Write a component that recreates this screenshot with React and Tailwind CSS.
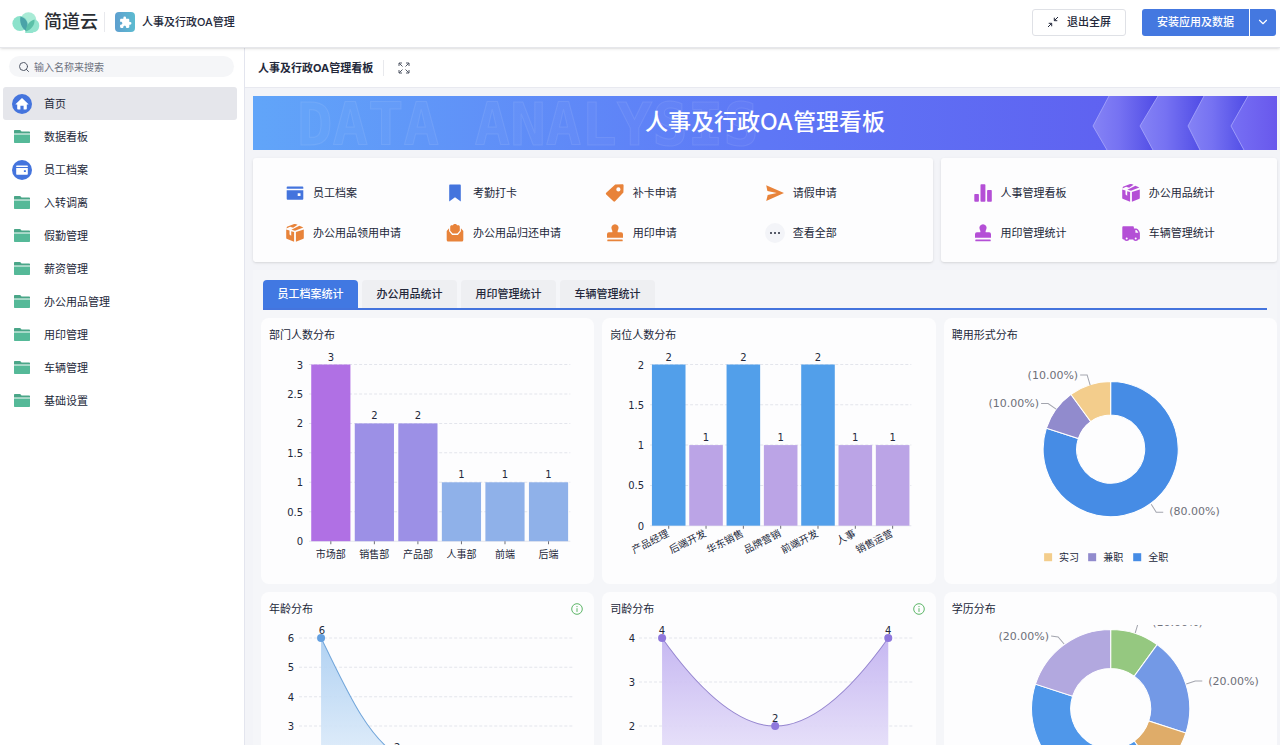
import React from 'react';
import { Search, ChevronDown } from 'lucide-react';
import { MdExtension } from 'react-icons/md';

const Wallet = ({ className }) => (
    <svg viewBox="0 0 20 20" className={className} fill="currentColor" aria-hidden="true">
        <path d="M2.500 3.500h15a.8.800 0 0 1 .8.800v1.400H1.700V4.300a.8.800 0 0 1 .8-.8z" />
        <path fillRule="evenodd" d="M1.700 7.300h16.600v8.500a.9.900 0 0 1-.9.900H2.600a.9.900 0 0 1-.9-.9zM12.700 10.200v2.800h2.800v-2.800z" />
    </svg>
);

const Bookmark = ({ className }) => (
    <svg viewBox="0 0 20 20" className={className} fill="currentColor" aria-hidden="true">
        <path d="M5 1.600h10a.8.800 0 0 1 .8.800v16L10 14.300l-5.800 4.100v-16A.8.800 0 0 1 5 1.600z" />
    </svg>
);

const Tag = ({ className }) => (
    <svg viewBox="0 0 20 20" className={className} fill="currentColor" aria-hidden="true">
        <path fillRule="evenodd" d="M10.200 1.500l7.200-.3c.7 0 1.200.5 1.200 1.200l-.2 7-8.300 8.900a1.200 1.200 0 0 1-1.700 0L1.200 11.400a1.200 1.200 0 0 1 0-1.700zM13.400 4.300a2.100 2.100 0 1 0 0 4.200 2.100 2.100 0 0 0 0-4.200z" />
    </svg>
);

const Send = ({ className }) => (
    <svg viewBox="0 0 20 20" className={className} fill="currentColor" aria-hidden="true">
        <path d="M1.200 2.200L19 10 1.200 18l1.500-5.900 9-2.100-9.300-2z" />
    </svg>
);

const Box = ({ className }) => (
    <svg viewBox="0 0 20 20" className={className} fill="currentColor" aria-hidden="true">
        <path d="M1.400 5.500l3.700-1.700 3 .9 4.500-2.900-2.300-.8a2 2 0 0 0-1.200 0L2 3.700z" />
        <path d="M1.200 6.600l3.300 1v4l1.700 1.200V8.200l2.900.9v9.700l-6.900-2.700a1.500 1.500 0 0 1-1-1.400z" />
        <path d="M10.900 9.100l7.900-2.500v8.100c0 .7-.4 1.200-1 1.400l-6.900 2.700z" />
        <path d="M6.400 6.700l8-3.900 4 1.600-8.400 3.400z" />
    </svg>
);

const Inbox = ({ className }) => (
    <svg viewBox="0 0 20 20" className={className} fill="currentColor" aria-hidden="true">
        <path d="M5.200 3.800c0-.9.6-1.500 1.500-1.500H8c.2-.8.9-1.200 2-1.200s1.800.4 2 1.200h1.300c.9 0 1.500.6 1.500 1.500v3.900l-2.500 2.800H7.700L5.200 7.700z" />
        <path d="M4.100 5.200v3l3 3.700h5.800l3-3.700v-3L18.300 8v9a1.500 1.500 0 0 1-1.500 1.500H3.200A1.500 1.500 0 0 1 1.700 17V8z" />
    </svg>
);

const Stamp = ({ className }) => (
    <svg viewBox="0 0 20 20" className={className} fill="currentColor" aria-hidden="true">
        <path d="M10 1.200a3.600 3.600 0 0 1 3.400 4.800c-.6 1.400-1 2.500-.7 3.300h3.400a1.900 1.900 0 0 1 1.900 1.900v3.500H2v-3.500a1.900 1.900 0 0 1 1.900-1.900h3.400c.3-.8-.1-1.900-.7-3.300A3.600 3.600 0 0 1 10 1.200z" />
        <rect x="2.300" y="16.400" width="15.400" height="1.900" rx=".6" />
    </svg>
);

const Bars = ({ className }) => (
    <svg viewBox="0 0 20 20" className={className} fill="currentColor" aria-hidden="true">
        <rect x="1.300" y="11" width="4.600" height="7.800" rx=".8" />
        <rect x="7.500" y="1.300" width="4.900" height="17.500" rx=".8" />
        <rect x="14.100" y="7" width="4.700" height="11.800" rx=".8" />
    </svg>
);

const Truck = ({ className }) => (
    <svg viewBox="0 0 20 20" className={className} fill="currentColor" aria-hidden="true">
        <path fillRule="evenodd" d="M2.500 3.300h9.200c.7 0 1.200.5 1.200 1.200v.9h2.500c1.200 0 3.500 3 3.500 4.500v5.500c0 .6-.5 1.100-1.100 1.100H2.500c-.7 0-1.200-.5-1.200-1.200V4.500c0-.7.5-1.200 1.200-1.200zM14.400 7v2.800h2.900c-.2-1-1.200-2.400-2-2.800z" />
        <circle cx="5.700" cy="15.500" r="2.500" />
        <circle cx="14.700" cy="15.500" r="2.500" />
        <circle cx="5.700" cy="15.500" r="1" fill="#fff" />
        <circle cx="14.700" cy="15.500" r="1" fill="#fff" />
    </svg>
);

const More = () => (
    <span className="flex size-5 items-center justify-center gap-[2px] rounded-full bg-[#f3f4f8]">
        <span className="size-[2px] rounded-full bg-[#23283a]" />
        <span className="size-[2px] rounded-full bg-[#23283a]" />
        <span className="size-[2px] rounded-full bg-[#23283a]" />
    </span>
);

const Folder = () => (
    <svg viewBox="0 0 16 13" className="h-[13px] w-4" aria-hidden="true">
        <path d="M0 3.600V1C0 .4.400 0 1 0h4.700c.5 0 .8.200 1.100.6l.7.900H15c.6 0 1 .4 1 1v1.100z" fill="#4aa688" />
        <path d="M0 4.400h16v7.600c0 .6-.4 1-1 1H1c-.6 0-1-.4-1-1z" fill="#55b998" />
    </svg>
);

const Home = () => (
    <span className="flex size-5 items-center justify-center rounded-full bg-[#4474dd]">
        <svg viewBox="0 0 14 14" className="size-[14px]" fill="#fff" aria-hidden="true">
            <path d="M7 1l6.300 5.900c.3.300.1.700-.3.700h-1.200v4.200c0 .5-.3.800-.8.800H8.600V8.800H5.400v3.800H3c-.5 0-.8-.3-.8-.8V7.600H1c-.4 0-.6-.4-.3-.7z" />
        </svg>
    </span>
);

const Logo = () => (
    <svg viewBox="0 0 28 21" className="h-[21px] w-7" aria-hidden="true">
        <circle cx="16.500" cy="8" r="7.800" fill="#a9ebd6" />
        <circle cx="8" cy="11.500" r="7.600" fill="#8ce2cb" />
        <path d="M13 20.500a6.800 6.800 0 0 0 8.500-.2 6.600 6.600 0 0 0 1.500-12.700C18.500 9 14 14 13 20.500z" fill="#93e4ce" />
        <path d="M8.500 4.500c5 1.500 7.500 5 7 9.500l-1.500 5C9.500 16 7.300 10 8.500 4.500z" fill="#4aa3a8" />
        <path d="M22.500 7.600c.5 5-2.500 9.900-8.500 11.900-.2-5.500 3-10.500 8.500-11.900z" fill="#5cc0a8" />
    </svg>
);

const navItems = [
    { label: '首页', icon: 'home', active: true },
    { label: '数据看板' },
    { label: '员工档案', icon: 'wallet' },
    { label: '入转调离' },
    { label: '假勤管理' },
    { label: '薪资管理' },
    { label: '办公用品管理' },
    { label: '用印管理' },
    { label: '车辆管理' },
    { label: '基础设置' },
];

const shortcuts = [
    { label: '员工档案', icon: Wallet, color: 'text-[#4474dd]' },
    { label: '考勤打卡', icon: Bookmark, color: 'text-[#4474dd]' },
    { label: '补卡申请', icon: Tag, color: 'text-[#e8833a]' },
    { label: '请假申请', icon: Send, color: 'text-[#e8833a]' },
    { label: '办公用品领用申请', icon: Box, color: 'text-[#e8833a]' },
    { label: '办公用品归还申请', icon: Inbox, color: 'text-[#e8833a]' },
    { label: '用印申请', icon: Stamp, color: 'text-[#e8833a]' },
    { label: '查看全部', icon: More, color: '' },
];

const reports = [
    { label: '人事管理看板', icon: Bars, color: 'text-[#b44fd6]' },
    { label: '办公用品统计', icon: Box, color: 'text-[#b44fd6]' },
    { label: '用印管理统计', icon: Stamp, color: 'text-[#b44fd6]' },
    { label: '车辆管理统计', icon: Truck, color: 'text-[#b44fd6]' },
];

const tabs = ['员工档案统计', '办公用品统计', '用印管理统计', '车辆管理统计'];

const NavIcon = ({ name }) => {
    if (name === 'home') return <Home />;
    if (name === 'wallet') {
        return (
            <span className="flex size-5 items-center justify-center rounded-full bg-[#4474dd] text-white">
                <Wallet className="size-[14px]" />
            </span>
        );
    }
    return <Folder />;
};

const Shortcut = ({ label, icon: Icon, color }) => (
    <a href="#" className="flex h-10 items-center gap-2 whitespace-nowrap">
        <span className={color}>
            <Icon className="block size-5" />
        </span>
        {label}
    </a>
);

// Charts share one canvas: 333 wide, starting below the 33px card title
const ChartSvg = ({ label, children }) => (
    <svg viewBox="0 33 333 233" className="block w-full overflow-hidden" role="img" aria-label={label}>
        {children}
    </svg>
);

const numberText = "font-['DejaVu_Sans',sans-serif] text-[10px] fill-[#23283a]";
const nameText = "font-['Noto_Sans_CJK_SC',sans-serif] text-[10px] fill-[#23283a]";
const pieText = "font-['DejaVu_Sans',sans-serif] text-[11px] fill-[#6e7079]";

const YAxis = ({ ticks, top, bottom, max, x, left, right }) =>
    ticks.map((t) => {
        const y = bottom - ((bottom - top) * t) / max;
        return (
            <g key={t}>
                <line x1={left} x2={right} y1={y} y2={y} stroke="#e3e5ec" strokeDasharray={t === 0 ? '0' : '3 2'} />
                <text x={x} y={y + 4} textAnchor="end" className={numberText}>{t}</text>
            </g>
        );
    });

const BarChart = ({ label, data, ticks, max, bottom, rotate }) => {
    const left = 48;
    const right = 309;
    const top = 46.5;
    const step = (right - left) / data.length;
    const barWidth = step * 0.9;
    return (
        <ChartSvg label={label}>
            <YAxis ticks={ticks} top={top} bottom={bottom} max={max} x={42} left={left} right={right} />
            {data.map(({ name, value, color }, i) => {
                const h = ((bottom - top) * value) / max;
                const cx = left + step * (i + 0.5);
                return (
                    <g key={name}>
                        <rect x={cx - barWidth / 2} y={bottom - h} width={barWidth} height={h} fill={color} />
                        <line x1={cx} x2={cx} y1={bottom} y2={bottom + 3} stroke="#6e7079" />
                        <text x={cx} y={bottom - h - 4} textAnchor="middle" className={numberText}>{value}</text>
                        {rotate ? (
                            <text transform={`translate(${cx + 1} ${bottom + 10}) rotate(-27)`} textAnchor="end" className={nameText}>{name}</text>
                        ) : (
                            <text x={cx} y={bottom + 17} textAnchor="middle" className={nameText}>{name}</text>
                        )}
                    </g>
                );
            })}
        </ChartSvg>
    );
};

const point = (cx, cy, r, deg) => {
    const a = ((deg - 90) * Math.PI) / 180;
    return `${cx + r * Math.cos(a)} ${cy + r * Math.sin(a)}`;
};

const Donut = ({ cx, cy, outer, inner, slices }) =>
    slices.map(({ from, to, color }) => {
        const large = to - from > 180 ? 1 : 0;
        const d = `M${point(cx, cy, outer, from)} A${outer} ${outer} 0 ${large} 1 ${point(cx, cy, outer, to)} L${point(cx, cy, inner, to)} A${inner} ${inner} 0 ${large} 0 ${point(cx, cy, inner, from)} Z`;
        return <path key={from} d={d} fill={color} stroke="#fff" strokeWidth="1" />;
    });

const PieLabel = ({ line, x, y, anchor, children }) => (
    <g>
        <polyline points={line} fill="none" stroke="#a3a5ae" />
        <text x={x} y={y} textAnchor={anchor} className={pieText}>{children}</text>
    </g>
);

const ChartCard = ({ title, info, children }) => (
    <section className="overflow-hidden rounded-lg bg-[#fdfdfe]">
        <div className="flex h-[33px] items-center justify-between pl-2 pr-[11px]">
            <h3 className="text-[11px]">{title}</h3>
            {info && (
                <svg viewBox="0 0 12 12" className="size-3" fill="none" stroke="#5cb567" aria-hidden="true">
                    <circle cx="6" cy="6" r="5.300" />
                    <path d="M6 5.200v3.700M6 3v1.100" />
                </svg>
            )}
        </div>
        {children}
    </section>
);

const departments = [
    { name: '市场部', value: 3, color: '#b070e4' },
    { name: '销售部', value: 2, color: '#9c90e6' },
    { name: '产品部', value: 2, color: '#9c90e6' },
    { name: '人事部', value: 1, color: '#8fb1e9' },
    { name: '前端', value: 1, color: '#8fb1e9' },
    { name: '后端', value: 1, color: '#8fb1e9' },
];

const positions = [
    { name: '产品经理', value: 2, color: '#529fea' },
    { name: '后端开发', value: 1, color: '#bba4e6' },
    { name: '华东销售', value: 2, color: '#529fea' },
    { name: '品牌营销', value: 1, color: '#bba4e6' },
    { name: '前端开发', value: 2, color: '#529fea' },
    { name: '人事', value: 1, color: '#bba4e6' },
    { name: '销售运营', value: 1, color: '#bba4e6' },
];

const Header = () => (
    <header className="relative z-10 flex h-12 shrink-0 items-center border-b border-[#e6e7eb] bg-white pl-3 pr-1 pb-[3px] shadow-sm">
        <a href="#" className="flex items-center gap-1">
            <Logo />
            <span className="text-[18px] leading-6 font-medium text-[#2a2e33]">简道云</span>
        </a>
        <span className="ml-1.5 h-5 w-px bg-[#e8e9ed]" />
        <span className="ml-[10px] flex size-5 items-center justify-center rounded bg-linear-to-r from-[#5e9fcf] to-[#5cbbd0] text-white">
            <MdExtension className="size-[13px]" />
        </span>
        <h1 className="ml-[7px] font-medium">人事及行政OA管理</h1>
        <div className="ml-auto flex items-center gap-4">
            <button type="button" className="flex h-[27px] w-[94px] items-center justify-center gap-2 rounded-[3px] border border-[#dfe1e6] font-medium">
                <svg viewBox="0 0 12 12" className="size-3" fill="none" stroke="#23283a" aria-hidden="true">
                    <path d="M11 1L7.500 4.500M7.300 1.700v3h3M1 11l3.500-3.500M1.700 7.300h3v3" />
                </svg>
                退出全屏
            </button>
            <div className="flex h-[27px] gap-px overflow-hidden rounded-[3px] text-white">
                <button type="button" className="w-[107px] bg-[#4478e0] font-medium">安装应用及数据</button>
                <button type="button" aria-label="更多安装方式" className="flex w-[26px] items-center justify-center bg-[#4478e0]">
                    <ChevronDown size={14} />
                </button>
            </div>
        </div>
    </header>
);

const Sidebar = () => (
    <aside className="w-[245px] shrink-0 border-r border-[#e3e5ee] bg-white pt-2">
        <label className="ml-[9px] mr-[10px] flex h-[21px] items-center gap-1 rounded-full bg-[#f5f6f8] pl-[9px]">
            <Search size={12} className="shrink-0 text-[#525967]" />
            <input
                type="text"
                aria-label="搜索"
                placeholder="输入名称来搜索"
                className="w-full bg-transparent text-[10px] outline-none placeholder:text-[#6d7280]"
            />
        </label>
        <nav className="mt-[10px] pl-[3px] pr-[7px]">
            {navItems.map(({ label, icon, active }) => (
                <a
                    key={label}
                    href="#"
                    className={`flex h-[33px] items-center gap-3 rounded-[3px] pl-[9px] ${active ? 'bg-[#e5e6eb]' : ''}`}
                >
                    <span className="flex w-5 justify-center">
                        <NavIcon name={icon} />
                    </span>
                    {label}
                </a>
            ))}
        </nav>
    </aside>
);

const Banner = () => (
    <div className="relative flex h-[54px] items-center justify-center overflow-hidden bg-linear-to-r from-[#61a5f9] via-[#5e77f6] to-[#5f57ee] pb-[2px]">
        <svg viewBox="0 0 540 54" className="absolute left-0 top-0 h-[54px] w-[540px]" aria-hidden="true">
            <text
                x="44"
                y="49"
                className="font-['DejaVu_Sans_Mono',monospace] text-[59px] font-bold"
                fill="#fff"
                fillOpacity=".03"
                stroke="#fff"
                strokeOpacity=".09"
            >
                DATA ANALYSIS
            </text>
        </svg>
        <svg viewBox="0 0 190 54" className="absolute right-0 top-0 h-[54px] w-[190px]" aria-hidden="true">
            <defs>
                <linearGradient id="arrow" x1="0" x2="1" y1="0" y2="0">
                    <stop offset="0" stopColor="#8583f5" />
                    <stop offset=".4" stopColor="#7672f2" />
                    <stop offset="1" stopColor="#4f4be5" />
                </linearGradient>
                <linearGradient id="arrowEnd" x1="0" x2="1" y1="0" y2="0">
                    <stop offset="0" stopColor="#7770f4" />
                    <stop offset="1" stopColor="#6858ec" />
                </linearGradient>
            </defs>
            <path d="M22 0L6 30l14 24h46L53 30 71 0z" fill="url(#arrow)" />
            <path d="M71 0L53 30l13 24h47l-12-24 16-30z" fill="url(#arrow)" />
            <path d="M117 0l-16 30 12 24h44l-13-24 17-30z" fill="url(#arrow)" />
            <path d="M161 0l-17 30 13 24h33V0z" fill="url(#arrowEnd)" />
            <g fill="none" stroke="#a9a8fb" strokeOpacity=".8">
                <path d="M22 0L6 30l14 24M71 0L53 30l13 24M117 0l-16 30 12 24M161 0l-17 30 13 24" />
            </g>
        </svg>
        <h2 className="relative text-[23px] leading-8 font-medium text-white">人事及行政OA管理看板</h2>
    </div>
);

const legend = [
    { name: '实习', color: '#f3cd8c', x: 100 },
    { name: '兼职', color: '#918bcd', x: 144 },
    { name: '全职', color: '#468ce5', x: 189 },
];

const Charts = () => (
    <div className="mt-2 grid grid-cols-3 gap-2 pl-2">
        <ChartCard title="部门人数分布">
            <BarChart label="部门人数分布" data={departments} ticks={[0, 0.5, 1, 1.5, 2, 2.5, 3]} max={3} bottom={223} />
        </ChartCard>

        <ChartCard title="岗位人数分布">
            <BarChart label="岗位人数分布" data={positions} ticks={[0, 0.5, 1, 1.5, 2]} max={2} bottom={207.5} rotate />
        </ChartCard>

        <ChartCard title="聘用形式分布">
            <ChartSvg label="聘用形式分布">
                <Donut
                    cx={166.5}
                    cy={131}
                    outer={67.5}
                    inner={34}
                    slices={[
                        { from: 0, to: 288, color: '#468ce5' },
                        { from: 288, to: 324, color: '#918bcd' },
                        { from: 324, to: 360, color: '#f3cd8c' },
                    ]}
                />
                <PieLabel line="146,67 143,57 136,57" x={134} y={61} anchor="end">(10.00%)</PieLabel>
                <PieLabel line="112,91 104,85.500 97,85.500" x={95} y={89} anchor="end">(10.00%)</PieLabel>
                <PieLabel line="207,186 212,194 219,194" x={225} y={197} anchor="start">(80.00%)</PieLabel>
                {legend.map(({ name, color, x }) => (
                    <g key={name}>
                        <rect x={x} y="235" width="8" height="8" fill={color} />
                        <text x={x + 15} y="243" className={nameText}>{name}</text>
                    </g>
                ))}
            </ChartSvg>
        </ChartCard>

        <ChartCard title="年龄分布" info>
            <ChartSvg label="年龄分布">
                <defs>
                    <linearGradient id="age" x1="0" x2="0" y1="0" y2="1">
                        <stop offset="0" stopColor="#a9cdf1" />
                        <stop offset="1" stopColor="#f6fafe" />
                    </linearGradient>
                </defs>
                <YAxis ticks={[0, 1, 2, 3, 4, 5, 6]} top={46} bottom={222} max={6} x={33} left={38} right={312} />
                <path d="M60 46C84 94 104 142 136 163C160 180 186 189 211 193C236 196 262 193 287 193V222H60z" fill="url(#age)" fillOpacity=".9" />
                <path d="M60 46C84 94 104 142 136 163C160 180 186 189 211 193C236 196 262 193 287 193" fill="none" stroke="#70a5da" />
                <circle cx="60" cy="46" r="4" fill="#64a0e0" />
                <circle cx="136" cy="163" r="4" fill="#64a0e0" />
                <text x="61" y="42" textAnchor="middle" className={numberText}>6</text>
                <text x="136" y="159" textAnchor="middle" className={numberText}>2</text>
            </ChartSvg>
        </ChartCard>

        <ChartCard title="司龄分布" info>
            <ChartSvg label="司龄分布">
                <defs>
                    <linearGradient id="seniority" x1="0" x2="0" y1="0" y2="1">
                        <stop offset="0" stopColor="#c0b0f0" />
                        <stop offset="1" stopColor="#faf8fe" />
                    </linearGradient>
                </defs>
                <YAxis ticks={[0, 1, 2, 3, 4]} top={46} bottom={222} max={4} x={33} left={37} right={312} />
                <path d="M60 46C97 98 135 134 173 134C211 134 249 98 286 46V222H60z" fill="url(#seniority)" fillOpacity=".9" />
                <path d="M60 46C97 98 135 134 173 134C211 134 249 98 286 46" fill="none" stroke="#9484cf" />
                <circle cx="60" cy="46" r="4" fill="#8f78dc" />
                <circle cx="173" cy="134" r="4" fill="#8f78dc" />
                <circle cx="286" cy="46" r="4" fill="#8f78dc" />
                <text x="60" y="42" textAnchor="middle" className={numberText}>4</text>
                <text x="173" y="130" textAnchor="middle" className={numberText}>2</text>
                <text x="286" y="42" textAnchor="middle" className={numberText}>4</text>
            </ChartSvg>
        </ChartCard>

        <ChartCard title="学历分布">
            <ChartSvg label="学历分布">
                <Donut
                    cx={166.5}
                    cy={116.5}
                    outer={79}
                    inner={40}
                    slices={[
                        { from: 0, to: 36, color: '#95c880' },
                        { from: 36, to: 108, color: '#7399e6' },
                        { from: 108, to: 144, color: '#dfac69' },
                        { from: 144, to: 288, color: '#4f97ea' },
                        { from: 288, to: 360, color: '#b2a8df' },
                    ]}
                />
                <PieLabel line="191,41 194,31 204,31" x={208} y={34} anchor="start">(10.00%)</PieLabel>
                <PieLabel line="242,92 251,89 258,89" x={264} y={93} anchor="start">(20.00%)</PieLabel>
                <PieLabel line="120,52 114,45 107,44" x={105} y={48} anchor="end">(20.00%)</PieLabel>
            </ChartSvg>
        </ChartCard>
    </div>
);

const App = () => {
    return (
        <div className="flex h-screen flex-col overflow-hidden bg-[#f3f4f8] font-['Inter','Noto_Sans_CJK_SC',sans-serif] text-[11px] leading-4 text-[#23283a]">
            <Header />
            <div className="flex min-h-0 flex-1">
                <Sidebar />
                <main className="flex min-w-0 flex-1 flex-col">
                    <div className="flex h-10 shrink-0 items-center border-b border-[#e8e9f0] bg-white pl-[13px]">
                        <h2 className="font-bold">人事及行政OA管理看板</h2>
                        <span className="ml-2.5 h-4 w-px bg-[#e8e9ed]" />
                        <button type="button" aria-label="全屏" className="ml-[14px]">
                            <svg viewBox="0 0 12 12" className="size-3" fill="none" stroke="#525967" aria-hidden="true">
                                <path d="M1 4V1h3M1 1l3.500 3.500M8 1h3v3M11 1L7.500 4.500M1 8v3h3M1 11l3.500-3.500M11 8v3H8M11 11L7.500 7.500" />
                            </svg>
                        </button>
                    </div>

                    <div className="min-h-0 flex-1 overflow-hidden pl-2 pr-[3px] pt-2">
                        <Banner />

                        {/* Quick entries */}
                        <div className="mt-2 grid grid-cols-[2.02fr_1fr] gap-2">
                            <div className="grid grid-cols-4 rounded-[3px] bg-[#fdfdfe] pb-[9px] pl-8 pr-2 pt-[15px] shadow-sm">
                                {shortcuts.map((item) => (
                                    <Shortcut key={item.label} {...item} />
                                ))}
                            </div>
                            <div className="grid grid-cols-2 rounded-[3px] bg-[#fdfdfe] pb-[9px] pl-8 pr-2 pt-[15px] shadow-sm">
                                {reports.map((item) => (
                                    <Shortcut key={item.label} {...item} />
                                ))}
                            </div>
                        </div>

                        {/* Statistics */}
                        <div className="mt-2 bg-[#f5f6f9] pt-[10px]">
                            <div className="mx-[10px] flex gap-1 border-b-2 border-[#4474dd]">
                                {tabs.map((tab, i) => (
                                    <button
                                        key={tab}
                                        type="button"
                                        className={`h-7 w-[95px] rounded-t font-medium ${i === 0 ? 'bg-[#4178e2] text-white' : 'bg-[#eeeff2]'}`}
                                    >
                                        {tab}
                                    </button>
                                ))}
                            </div>
                            <Charts />
                        </div>
                    </div>
                </main>
            </div>
        </div>
    );
};

export default App;
